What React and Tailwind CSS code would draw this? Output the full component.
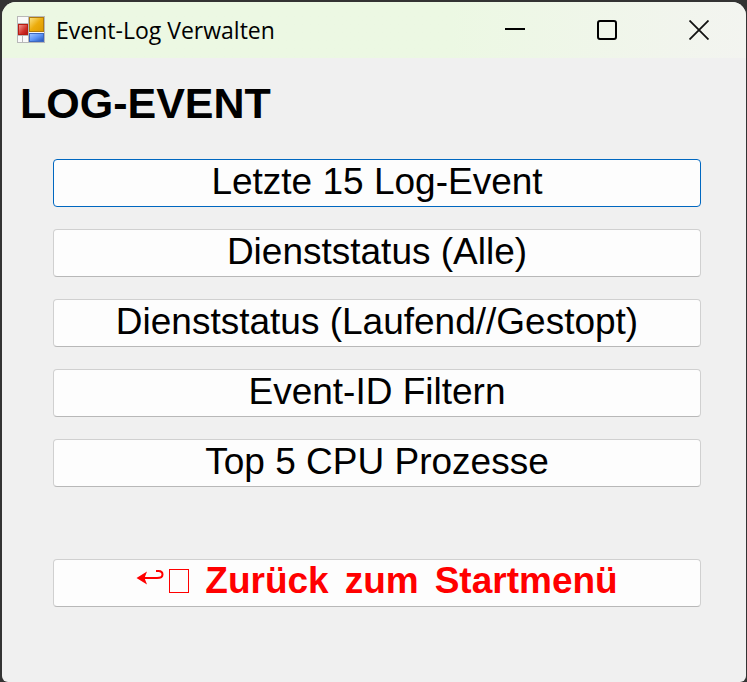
const actions = [
  "Letzte 15 Log-Event",
  "Dienststatus (Alle)",
  "Dienststatus (Laufend//Gestopt)",
  "Event-ID Filtern",
  "Top 5 CPU Prozesse",
];

const buttonBase =
  "flex h-12 w-full items-start justify-center rounded border bg-[#fdfdfd] text-[37px] whitespace-nowrap";

function AppIcon() {
  return (
    <svg className="h-7 w-7" viewBox="0 0 28 28" aria-hidden="true">
      <defs>
        <linearGradient id="gold" x1="0" y1="0" x2="1" y2="1">
          <stop offset="0" stopColor="#fbe58a" />
          <stop offset="0.5" stopColor="#ecac0c" />
          <stop offset="1" stopColor="#dc9a00" />
        </linearGradient>
        <linearGradient id="blue" x1="0" y1="0" x2="1" y2="1">
          <stop offset="0" stopColor="#a4c6ff" />
          <stop offset="0.5" stopColor="#5e95f6" />
          <stop offset="1" stopColor="#2450b4" />
        </linearGradient>
        <linearGradient id="red" x1="0" y1="0" x2="1" y2="1">
          <stop offset="0" stopColor="#f4a09a" />
          <stop offset="0.6" stopColor="#d0302a" />
          <stop offset="1" stopColor="#b01010" />
        </linearGradient>
      </defs>
      <rect x="0.5" y="0.5" width="27" height="26" fill="#fafafa" stroke="#b8b8b8" />
      <path d="M0 7.5H12M5.5 19V27M0 19.5H12M11.5 0V27" stroke="#b8b8b8" fill="none" />
      <rect x="12.5" y="1.5" width="14" height="14" fill="url(#gold)" stroke="#b07c0c" />
      <rect x="12.5" y="17.5" width="14" height="8" fill="url(#blue)" stroke="#3c68c0" />
      <rect x="1.5" y="8.5" width="9" height="10" fill="url(#red)" stroke="#b81c14" />
    </svg>
  );
}

function WindowControls() {
  const cls = "flex h-full w-[92px] items-center justify-center";
  return (
    <div className="flex h-full pr-px">
      <button type="button" aria-label="Minimieren" className={cls}>
        <svg width="20" height="20" viewBox="0 0 20 20"><path d="M0 9H20" stroke="#000" strokeWidth="2" /></svg>
      </button>
      <button type="button" aria-label="Maximieren" className={cls}>
        <svg width="20" height="20" viewBox="0 0 20 20"><path d="M3 0H17A3 3 0 0 1 20 3V17A3 3 0 0 1 17 20H3A3 3 0 0 1 0 17V3A3 3 0 0 1 3 0ZM3 2A1 1 0 0 0 2 3V17A1 1 0 0 0 3 18H17A1 1 0 0 0 18 17V3A1 1 0 0 0 17 2Z" fillRule="evenodd" /></svg>
      </button>
      <button type="button" aria-label="Schließen" className={cls}>
        <svg width="20" height="20" viewBox="0 0 20 20"><path d="M0.5 0.5L19.5 19.5M19.5 0.5L0.5 19.5" stroke="#111" strokeWidth="1.8" /></svg>
      </button>
    </div>
  );
}

export default function App() {
  return (
    <div className="flex min-h-screen flex-col bg-[#333] pt-[2px] pr-px pl-[2px] font-['Liberation_Sans',Arial,sans-serif] text-black">
      <div className="flex flex-1 flex-col overflow-hidden rounded-t-[14px] rounded-b-[6px] bg-[#f0f0f0]">
        <header className="flex h-14 items-center justify-between bg-linear-to-r from-[#ecf8e3] from-60% to-[#f3f4f0] pl-[15px]">
          <div className="flex items-center gap-[11px]">
            <AppIcon />
            <span className="font-['Open_Sans','Noto_Sans',sans-serif] text-[23px] leading-8">Event-Log Verwalten</span>
          </div>
          <WindowControls />
        </header>
        <main className="px-[18px] pt-5">
          <h1 className="text-[43px] leading-[50px] font-bold">LOG-EVENT</h1>
          <div className="flex flex-col gap-[22px] pt-[31px] pr-[27px] pl-[33px]">
            {actions.map((label, i) => (
              <button
                key={label}
                type="button"
                className={`${buttonBase} leading-[44px] ${i === 0 ? "border-[#0067c0]" : "border-[#d0d0d0] border-b-[#b8b8b8]"}`}
              >
                {label}
              </button>
            ))}
            <button
              type="button"
              className={`${buttonBase} mt-[50px] gap-4 border-[#d0d0d0] border-b-[#b8b8b8] leading-[42px] font-bold text-[#ff0000]`}
            >
              <svg className="mt-2 h-8 w-[53px]" viewBox="0 0 53 32" fill="none" stroke="#ff0000" aria-hidden="true">
                <path d="M5 10H21C25 10 26.5 8.5 26.5 6.5C26.5 4 25 3 22.5 3H20" strokeWidth="2" />
                <path d="M0.5 10L11 3.5L8.5 10L11 16.5Z" fill="#ff0000" stroke="none" />
                <rect x="33.5" y="1.5" width="19" height="23" />
              </svg>
              <span>Zurück</span> <span>zum</span> <span>Startmenü</span>
            </button>
          </div>
        </main>
      </div>
    </div>
  );
}
